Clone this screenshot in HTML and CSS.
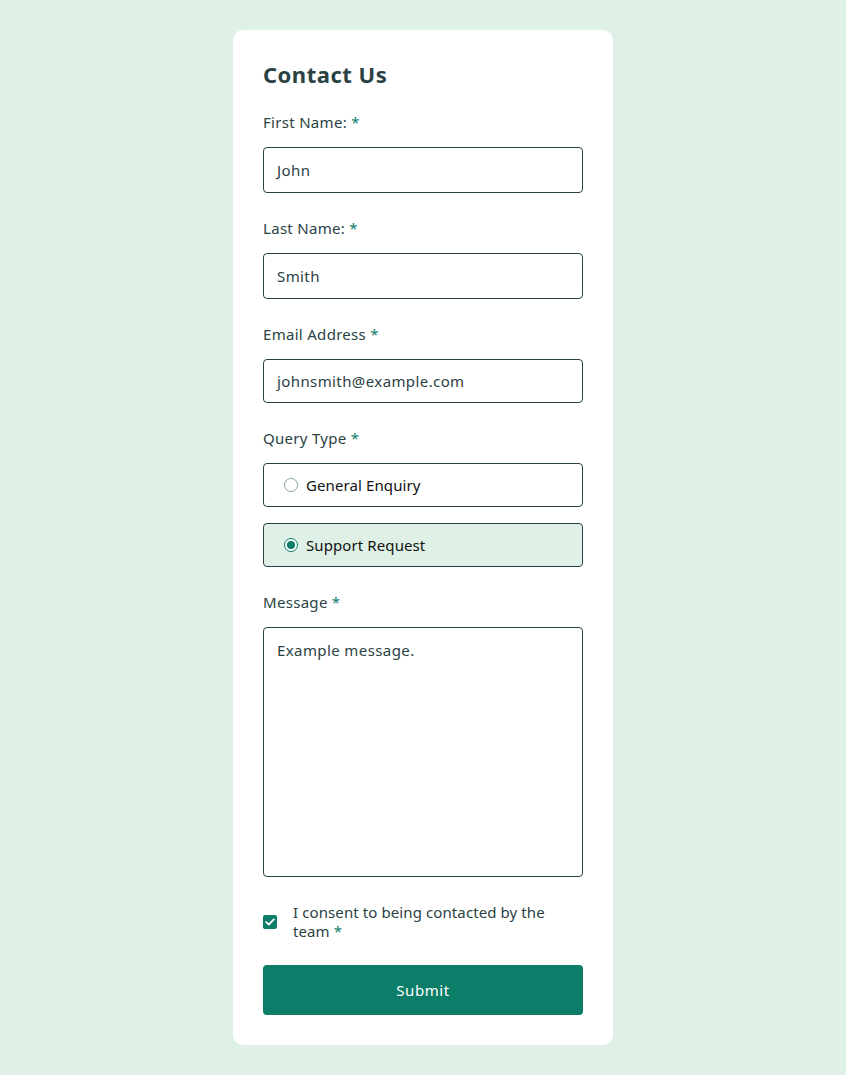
FILE: index.html
```html
<!DOCTYPE html>
<html lang="en">
<head>
<meta charset="utf-8">
<title>Contact Us</title>
<link rel="stylesheet" href="styles.css">
</head>
<body>
<main class="card">
  <h1 class="title">Contact Us</h1>
  <form class="form">
    <div class="field">
      <label class="label">First Name: <span class="req">*</span></label>
      <div class="input">John</div>
    </div>
    <div class="field">
      <label class="label">Last Name: <span class="req">*</span></label>
      <div class="input">Smith</div>
    </div>
    <div class="field">
      <label class="label">Email Address <span class="req">*</span></label>
      <div class="input short">johnsmith@example.com</div>
    </div>
    <div class="field">
      <label class="label">Query Type <span class="req">*</span></label>
      <div class="radios">
        <div class="radio"><span class="dot"></span><span class="radio-text">General Enquiry</span></div>
        <div class="radio selected"><span class="dot on"></span><span class="radio-text">Support Request</span></div>
      </div>
    </div>
    <div class="field">
      <label class="label">Message <span class="req">*</span></label>
      <div class="input textarea">Example message.</div>
    </div>
    <div class="consent">
      <span class="check"><svg width="10" height="8" viewBox="0 0 10 8"><path d="M1.2 4.2 L3.8 6.6 L8.8 1.4" fill="none" stroke="#fff" stroke-width="1.8" stroke-linecap="round" stroke-linejoin="round"/></svg></span>
      <div class="consent-text">
        <span class="consent-line">I consent to being contacted by the</span>
        <span class="consent-line">team <span class="req">*</span></span>
      </div>
    </div>
    <div class="submit">Submit</div>
  </form>
</main>
</body>
</html>
```
FILE: styles.css
```css
* { box-sizing: border-box; }
body {
  margin: 0;
  background: #dff0e6;
  font-family: "Noto Sans", "Open Sans", sans-serif;
  color: #2a4244;
  display: flex;
  justify-content: center;
  padding: 30px 0;
}
.card {
  width: 380px;
  background: #fff;
  border-radius: 10px;
  padding: 26px 30px 30px;
}
.title {
  margin: 0;
  font-size: 22px;
  font-weight: 700;
  line-height: 36px;
  letter-spacing: 0.5px;
}
.form { display: flex; flex-direction: column; margin-top: 20px; }
.field { display: flex; flex-direction: column; margin-bottom: 25px; }
.label {
  font-size: 15px;
  line-height: 20px;
  letter-spacing: 0.3px;
  margin-bottom: 15px;
}
.req { color: #0c7d69; }
.input {
  height: 46px;
  border: 1px solid #2a4244;
  border-radius: 4px;
  padding: 0 13px;
  display: flex;
  align-items: center;
  font-size: 15px;
  letter-spacing: 0.4px;
}
.input.short { height: 44px; }
.textarea {
  height: 250px;
  align-items: flex-start;
  padding-top: 12px;
}
.radios { display: flex; flex-direction: column; gap: 16px; }
.radio {
  height: 44px;
  border: 1px solid #2a4244;
  border-radius: 4px;
  display: flex;
  align-items: center;
  padding-left: 20px;
  gap: 8px;
  font-size: 15px;
  letter-spacing: 0.1px;
  color: #111;
}
.radio.selected { background: #dff0e6; }
.dot {
  width: 14px; height: 14px;
  border: 1px solid #87a3a6;
  border-radius: 50%;
  background: #fff;
  display: inline-flex;
  align-items: center; justify-content: center;
}
.dot.on { border: 1.5px solid #0c7d69; }
.dot.on::after {
  content: "";
  width: 8px; height: 8px;
  border-radius: 50%;
  background: #0c7d69;
}
.consent {
  display: flex;
  align-items: center;
  gap: 16px;
  padding: 1px 0;
}
.check {
  width: 14px; height: 14px;
  flex: none;
  background: #0c7d69;
  border-radius: 2px;
  display: inline-flex;
  align-items: center; justify-content: center;
}
.consent-text {
  display: flex;
  flex-direction: column;
  font-size: 15px;
  line-height: 19px;
  letter-spacing: 0.1px;
}
.submit {
  margin-top: 23px;
  height: 50px;
  background: #0c7d69;
  color: #fff;
  border-radius: 4px;
  display: flex;
  align-items: center; justify-content: center;
  font-size: 15px;
  letter-spacing: 0.6px;
}
```
